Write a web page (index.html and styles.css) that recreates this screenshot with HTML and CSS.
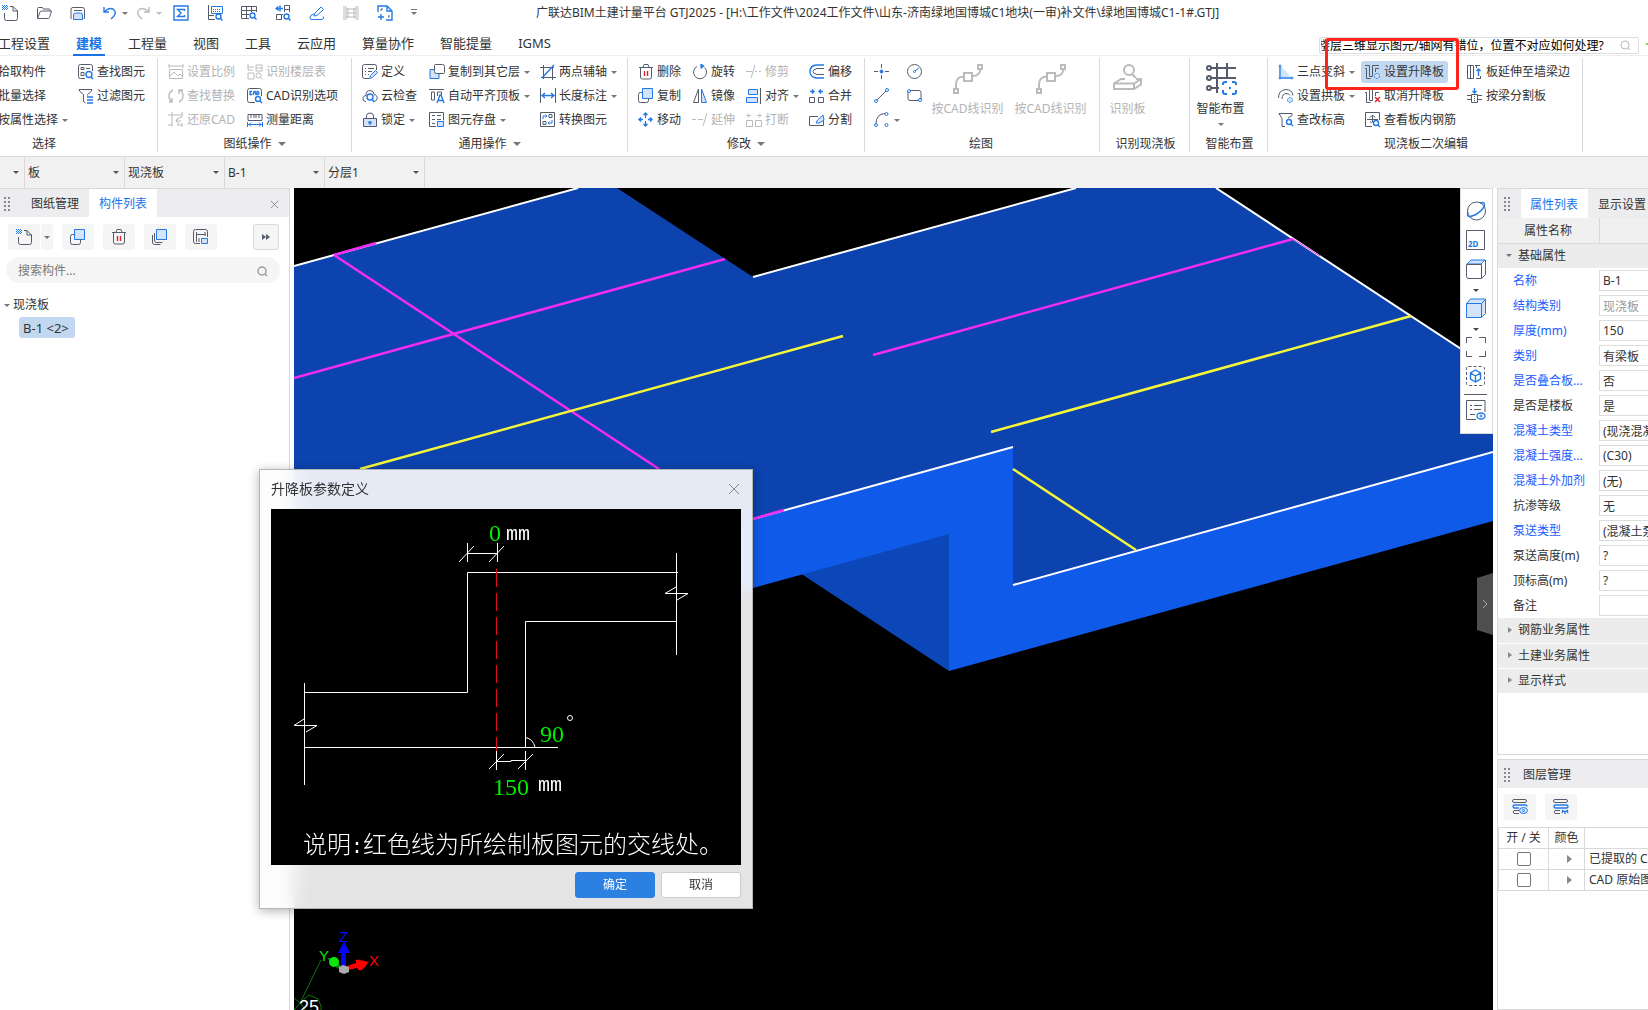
FILE: index.html
```html
<!DOCTYPE html>
<html lang="zh-CN">
<head>
    <meta charset="UTF-8">
    <meta name="viewport" content="width=device-width, initial-scale=1.0">
    <title>广联达BIM土建计量平台 GTJ2025</title>
    <link rel="stylesheet" href="styles.css">
</head>
<body>
    <!-- Title bar -->
    <header class="titlebar">
        <div class="quick">
            <button aria-label="新建"><svg class="ico" viewBox="0 0 16 16"><path d="M8 1.500h3l4.500 4.500v7.500q0 2-2 2h-9q-2 0-2-2V8M11 1.500V6h4.500"/><path class="b" stroke-dasharray="1 1" d="M0 .5h5M1 1.500h5M0 2.500h5M1 3.500h5M0 4.500h5"/></svg></button>
            <button aria-label="打开"><svg class="ico" viewBox="0 0 16 16"><path d="M1.500 13V3.500q0-1 1-1h4l1 1.500h5.500q1 0 1 1V6M1.500 13.500h10.500q1 0 1.500-1l2-6.500h-10q-1 0-1.500 1z"/></svg></button>
            <button aria-label="保存"><svg class="ico" viewBox="0 0 16 16"><path d="M1.500 13.500h-.5V4.500q0-2 2-2h9.500q2 0 2 2v9h-1M4 5.500h8"/><path class="b lf" d="M3.500 14.500V10q0-2 2-2h5q2 0 2 2v4.500z"/></svg></button>
        </div>
        <div class="quick undo">
            <button aria-label="撤销"><svg class="ico" viewBox="0 0 16 16"><path class="b w" d="M2 2v5h5M2 7q5-5 9-3q4 3 1 7l-3 3"/></svg><i class="caret"></i></button>
            <button class="off" aria-label="重做"><svg class="ico" viewBox="0 0 16 16"><path class="w" d="M13 2v5H8M13 7q-5-5-9-3q-4 3-1 7l3 3"/></svg><i class="caret"></i></button>
        </div>
        <div class="quick rest">
            <button aria-label="汇总计算"><svg class="ico" viewBox="0 0 16 16"><path class="b w" d="M1 1h14v14H1zM11.500 6V4.500h-7L8 8l-3.500 3.500h7V10"/></svg></button>
            <button aria-label="查看计算式"><svg class="ico" viewBox="0 0 16 16"><path d="M1.500 0v14.500H8M2 10.500h5"/><path class="b" d="M4.500 1.500h11v7h-11z"/><path class="b" stroke-dasharray="1 1" d="M6 4.500h8M6 6.500h8"/><circle class="b w" cx="11.500" cy="11.500" r="2.500"/><path class="b w" d="M13.500 13.500l2 2"/></svg></button>
            <button aria-label="查看报表"><svg class="ico" viewBox="0 0 16 16"><path d="M.5 1.500h15V7M.5 1.500v12H8M.5 5.500h15M.5 9.500H8M5.500 1.500v12M10.500 1.500V7"/><circle class="b w" cx="11.500" cy="10.500" r="2.500"/><path class="b w" d="M13.500 12.500l2 2"/></svg></button>
            <button aria-label="查看工程量"><svg class="ico" viewBox="0 0 16 16"><path d="M9.500 7V.500h5V7M9.500 4.500h5M1.500 9.500h5v5h-5zM8 9.500h-1"/><path class="b w" d="M5 .5v6M2 3.500h6M3.500 1.500L1 3.500l2.500 2"/><circle class="b w" cx="11.500" cy="11.500" r="2.500"/><path class="b w" d="M13.500 13.500l2 2"/></svg></button>
            <button aria-label="批注"><svg class="ico" viewBox="0 0 16 16"><path class="b" d="M5 11l1-3 6-6 2.500 2.500-6.500 6zM5 9q-4 1-4 3.500t2 2h10q3-1 1-3"/></svg></button>
            <button class="off" aria-label="多图"><svg class="ico" viewBox="0 0 16 16"><path d="M1 1v14M3 1v14M13 1v14M15 1v14M3 4h10M3 8h10M3 12h10M5 3v10M11 3v10"/></svg></button>
            <button aria-label="扩展"><svg class="ico" viewBox="0 0 16 16"><path class="b w" d="M1 7V1h9l5 5v9H9M10 1v5h5M4 9v6M1 12h6"/><path d="M4 6V4h2M11 12h1v-2"/></svg></button>
            <button class="more" aria-label="更多"><i class="caret"></i></button>
        </div>
        <div class="doc-title">广联达BIM土建计量平台 GTJ2025 - [H:\工作文件\2024工作文件\山东-济南绿地国博城C1地块(一审)补文件\绿地国博城C1-1#.GTJ]</div>
    </header>

    <!-- Tabs -->
    <nav class="tabs">
        <button>工程设置</button>
        <button class="active">建模</button>
        <button>工程量</button>
        <button>视图</button>
        <button>工具</button>
        <button>云应用</button>
        <button>算量协作</button>
        <button>智能提量</button>
        <button>IGMS</button>
        <div class="help-search">
            <input type="text" aria-label="搜索帮助" value="楼层三维显示图元/轴网有错位，位置不对应如何处理?">
            <svg class="ico off" viewBox="0 0 16 16"><circle cx="8" cy="7" r="4"/><path d="M11 10l2 2"/></svg>
        </div>
        <i class="edge-mark"></i>
    </nav>

    <!-- Ribbon -->
    <section class="ribbon">
        <div class="group g-select">
            <div class="group-body cells">
                <button>拾取构件</button>
                <button><svg class="ico" viewBox="0 0 16 16"><path d="M7 14.500H2.500q-2 0-2-2v-10q0-2 2-2h10q2 0 2 2V7M3 3.500h3v2H3zM3 8.500h3v3H3zM8 4.500h4"/><circle class="b w" cx="11" cy="10.500" r="3"/><path class="b w" d="M13 13l2 2"/></svg>查找图元</button>
                <button>批量选择</button>
                <button><svg class="ico" viewBox="0 0 16 16"><path d="M1 1.500h13q0 2-4.500 5v1M1 1.500q0 2 4.500 5v7l2 1.500"/><path class="b w" d="M9 9h6M9 12h6M9 15h6"/></svg>过滤图元</button>
                <button>按属性选择<i class="caret"></i></button>
            </div>
            <div class="group-name">选择</div>
        </div>
        <div class="group g-drawing">
            <div class="group-body cells">
                <button class="off" disabled><svg class="ico" viewBox="0 0 16 16"><path d="M1 0v4M15 0v4M1 2h14M1.500 5.500h13v9h-13zM2 12l4-4 4 4 2-2 3 3"/></svg>设置比例</button>
                <button class="off" disabled><svg class="ico" viewBox="0 0 16 16"><path d="M1 0v6h5M1 9h6v6H1zM9 1h6v6H9zM1 3h6M9 4h6"/><circle cx="11.500" cy="11.500" r="2.500"/><path d="M13.500 13.500l2 2"/></svg>识别楼层表</button>
                <button class="off" disabled><svg class="ico" viewBox="0 0 16 16"><path class="w" d="M5 2Q1 4 1 8t3 6M4 10v4H1M11 14q4-2 4-6t-3-6M11 6V2h4"/></svg>查找替换</button>
                <button><svg class="ico" viewBox="0 0 16 16"><path d="M8 14.500H2.500q-2 0-2-2v-10q0-2 2-2h10q2 0 2 2V8"/><path class="b w" d="M5 3.500H3v3h2M6 7l1-3.500h1L9 7M10 3.500h1q2 1.500 0 3h-1z"/><circle class="b w" cx="11" cy="11" r="2.500"/><path class="b w" d="M13 13l2 2"/></svg>CAD识别选项</button>
                <button class="off" disabled><svg class="ico" viewBox="0 0 16 16"><path d="M4 0v14M0 3h15M14 0v5M0 13h5M9 13h6M14 11v4M14 5q-6 1-6 4h5M10 6L8 9l3 3"/></svg>还原CAD</button>
                <button><svg class="ico" viewBox="0 0 16 16"><path d="M1 2.500h14v6H1zM4 3v3M7 3v3M9 3v3M12 3v3"/><path class="b" d="M.5 10v5M15.500 10v5M1 12.500h14M4 10.500l-2 2 2 2M12 10.500l2 2-2 2"/></svg>测量距离</button>
            </div>
            <div class="group-name">图纸操作<i class="caret big"></i></div>
        </div>
        <div class="group g-common">
            <div class="group-body cells">
                <button><svg class="ico" viewBox="0 0 16 16"><path d="M7 14.500H2.500q-2 0-2-2v-10q0-2 2-2h10q2 0 2 2V6M3 4.500h1M6 4.500h6M3 7.500h1M6 7.500h4M3 10.500h1M6 10.500h1"/><path class="b lf" d="M7.500 14.500l1-3 5-5 2 2-5 5z"/></svg>定义</button>
                <button><svg class="ico" viewBox="0 0 16 16"><path class="b lf" d="M1 5.500h9v9H1z"/><path class="wf" d="M5.500 1.500q0-1 1-1h7q2 0 2 2v6q0 1-1 1h-7q-2 0-2-2z"/></svg>复制到其它层<i class="caret"></i></button>
                <button><svg class="ico" viewBox="0 0 16 16"><path d="M0 3.500h14M3.500 1v14M1 13.500h15M12.500 4v12"/><path class="b w" d="M2 14L14 1"/></svg>两点辅轴<i class="caret"></i></button>
                <button><svg class="ico" viewBox="0 0 16 16"><path d="M4 13.500H3q-3-1-2-4 1-2 3-2 0-5 4-5t4 4q4 1 3 4.500-1 2.500-3 2.500"/><circle class="b w" cx="8" cy="9" r="3"/><path class="b w" d="M10 11l2 3"/></svg>云检查</button>
                <button><svg class="ico" viewBox="0 0 16 16"><path d="M0 1.500h15M2.500 4v8h3V4zM8.500 8V4h4v3"/><path class="b w" d="M8 15l3-8h1l3 8M9 12.500h5"/></svg>自动平齐顶板<i class="caret"></i></button>
                <button><svg class="ico" viewBox="0 0 16 16"><path d="M.5 0v15M15.500 0v15"/><path class="b w" d="M2 7.500h12M5 5L2 7.500 5 10M11 5l3 2.500-3 2.500"/></svg>长度标注<i class="caret"></i></button>
                <button><svg class="ico" viewBox="0 0 16 16"><path d="M4.500 6V4q0-3 3.500-3t3.500 3v2"/><path class="lf" d="M1.500 6.500h13v8h-13z"/><path class="b w" d="M8 9v4M6 10.500h4"/></svg>锁定<i class="caret"></i></button>
                <button><svg class="ico" viewBox="0 0 16 16"><path d="M7 14.500H.5V.5h14v8M3 3.500h3M3 7.500h3M3 11.500h3M8 3.500h4M8 7.500h4"/><path class="b lf" d="M8.500 9.500h6v5h-6z"/></svg>图元存盘<i class="caret"></i></button>
                <button><svg class="ico" viewBox="0 0 16 16"><path d="M.5.5h14v14H.5zM9 2.500h3v3H9zM3 9.500h3v3H3z"/><path class="b" d="M3 7V4h4M5.500 2.500L7 4 5.500 5.500M12 8v3H8M9.500 9.500L8 11l1.500 1.500"/></svg>转换图元</button>
            </div>
            <div class="group-name">通用操作<i class="caret big"></i></div>
        </div>
        <div class="group g-modify">
            <div class="group-body cells">
                <button><svg class="ico" viewBox="0 0 16 16"><path d="M1 3.500h14M2.500 4v9q0 2 2 2h7q2 0 2-2V4M5 3l1-2.500h4L11 3"/><path class="r w" d="M6.500 7v5M9.500 7v5"/></svg>删除</button>
                <button><svg class="ico" viewBox="0 0 16 16"><path d="M5 2.500A6.500 6.500 0 1 0 12.500 3.500"/><path class="b w" d="M8.500 0l3 2-3 2.500M11 2H8"/></svg>旋转</button>
                <button class="off" disabled><svg class="ico" viewBox="0 0 16 16"><path d="M0 7.500h6M9 1L5 14M9 7.500h2M13 7.500h2"/></svg>修剪</button>
                <button><svg class="ico" viewBox="0 0 16 16"><path class="b w" d="M15 1H7Q1 2 1 7.500T7 14h8"/><path d="M15 4.500H8q-4 1-4 3t4 3h7"/></svg>偏移</button>
                <button><svg class="ico" viewBox="0 0 16 16"><path d="M5 4.500H2.500q-2 0-2 2v6q0 2 2 2h6q2 0 2-2V11"/><path class="b lf" d="M4.500.500h10v10h-10z"/></svg>复制</button>
                <button><svg class="ico" viewBox="0 0 16 16"><path d="M6.500 1v13.500h-5z"/><path class="b lf" d="M9.500 1v13.500h5z"/></svg>镜像</button>
                <button><svg class="ico" viewBox="0 0 16 16"><path class="b lf" d="M2.500 1.500h9v5h-9zM.5 9.500h11v5H.5z"/><path d="M14.500 0v16"/></svg>对齐<i class="caret"></i></button>
                <button><svg class="ico" viewBox="0 0 16 16"><path d="M.5 9.500h5v5h-5zM9.500 9.500h5v5h-5z"/><path class="b w" d="M1 3.500h4M3 1.500l2 2-2 2M14 3.500h-4M12 1.500l-2 2 2 2"/></svg>合并</button>
                <button><svg class="ico" viewBox="0 0 16 16"><path class="b w" d="M7.500 5V1M5.500 3l2-2 2 2M7.500 10v4M5.500 12l2 2 2-2M5 7.500H1M3 5.500l-2 2 2 2M10 7.500h4M12 5.500l2 2-2 2"/><path d="M7 5.500h1M7 9.500h1"/></svg>移动</button>
                <button class="off" disabled><svg class="ico" viewBox="0 0 16 16"><path d="M0 7.500h4M6 7.500h5M15 1l-4 13"/></svg>延伸</button>
                <button class="off" disabled><svg class="ico" viewBox="0 0 16 16"><path d="M.5 8.500h6v6h-6zM9.500 8.500h6v6h-6zM5 3.500H1M3 1.500l-2 2 2 2M11 3.500h4M13 1.500l2 2-2 2"/></svg>打断</button>
                <button><svg class="ico" viewBox="0 0 16 16"><path d="M9 4.500H.5v9h14V8"/><path class="b lf" d="M7 11l1.500-3L14 3l1 5-5 3z"/></svg>分割</button>
            </div>
            <div class="group-name">修改<i class="caret big"></i></div>
        </div>
        <div class="group g-draw">
            <div class="group-body">
                <div class="cells">
                    <button aria-label="点"><svg class="ico" viewBox="0 0 16 16"><path d="M7.500 0v4M7.500 11v4M0 7.500h4M11 7.500h4"/><circle class="b bf" cx="7.500" cy="7.500" r="1.500"/></svg></button>
                    <button aria-label="圆"><svg class="ico" viewBox="0 0 16 16"><circle cx="7.500" cy="7.500" r="7"/><path class="b" d="M8 7l4-3"/><circle class="b" cx="7.500" cy="7.500" r="1"/></svg></button>
                    <button aria-label="直线"><svg class="ico" viewBox="0 0 16 16"><path d="M3 12L12 3"/><circle class="b" cx="2" cy="13" r="1.500"/><circle class="b" cx="13" cy="2" r="1.500"/></svg></button>
                    <button aria-label="矩形"><svg class="ico" viewBox="0 0 16 16"><path d="M3 2.500h9q2 0 2 2V11M12 12.500H3q-2 0-2-2V4"/><circle class="b" cx="2" cy="3" r="1.500"/><circle class="b" cx="13" cy="12" r="1.500"/></svg></button>
                    <button aria-label="弧线"><svg class="ico" viewBox="0 0 16 16"><path d="M2 12Q2 2 11 1.500"/><circle class="b" cx="2" cy="13" r="1.500"/><circle class="b" cx="12.500" cy="2" r="1.500"/><circle class="b" cx="12.500" cy="13" r="1.500"/></svg><i class="caret"></i></button>
                </div>
                <button class="large off" disabled><svg class="ico32" viewBox="0 0 32 32"><path d="M4 25V21q0-7 8-7.500M21 13q6 0 7.500-6M12 10h8v8h-8zM2 26h4v4H2zM26 2h4v4h-4z"/></svg>按CAD线识别</button>
                <button class="large off" disabled><svg class="ico32" viewBox="0 0 32 32"><path d="M4 25V21q0-7 8-7.500M21 13q6 0 7.500-6M12 10h8v8h-8zM2 26h4v4H2zM26 2h4v4h-4z"/></svg>按CAD线识别</button>
            </div>
            <div class="group-name">绘图</div>
        </div>
        <div class="group g-slab">
            <div class="group-body">
                <button class="large off" disabled><svg class="ico32" viewBox="0 0 32 32"><circle cx="17" cy="7" r="5"/><path d="M20 11l4 4M13 16H9l-7 4.500V26h20l7-4.500V16h-5M2 20.500h20l7-4.500M22 20.500V26"/></svg>识别板</button>
            </div>
            <div class="group-name">识别现浇板</div>
        </div>
        <div class="group g-smart">
            <div class="group-body">
                <button class="large"><svg class="ico32" viewBox="0 0 32 32"><path d="M6 5h25M6 15h25M6 25h8M12 0v30M22 0v15"/><circle cx="4" cy="5" r="2"/><circle cx="4" cy="15" r="2"/><circle cx="4" cy="25" r="2"/><path class="b" d="M18 22v-1q0-2 2-2h2M27 19h2q2 0 2 2v1M31 27v2q0 2-2 2h-2M22 31h-2q-2 0-2-2v-2M24 25h2"/></svg>智能布置<i class="caret"></i></button>
            </div>
            <div class="group-name">智能布置</div>
        </div>
        <div class="group g-edit">
            <div class="group-body cells">
                <button><svg class="ico" viewBox="0 0 16 16"><path class="lf nos" d="M3 2l10 11H3z"/><path class="b w" d="M2 2v12h12"/><circle class="b wf" cx="2" cy="2" r="1"/><circle class="b wf" cx="2" cy="14" r="1"/><circle class="b wf" cx="14" cy="14" r="1"/></svg>三点变斜<i class="caret"></i></button>
                <button class="pressed"><svg class="ico" viewBox="0 0 16 16"><path d="M0 1.500h4.500v11h3M0 4.500h1.500v10h4M7.500 12.500v-11H14M10.500 8V4.500H14"/><circle class="b lf" cx="12" cy="12" r="2.500" stroke-dasharray="2 1"/></svg>设置升降板</button>
                <button><svg class="ico" viewBox="0 0 16 16"><path d="M.5 1.500h6v13h-6zM3.500 2v12M8 1.500h5M9 14.500h5M13.500 12v2M9.500 1v3"/><path class="b w" d="M11.500 12V5M9.500 7l2-2 2 2"/></svg>板延伸至墙梁边</button>
                <button><svg class="ico" viewBox="0 0 16 16"><path d="M.5 10q0-8 7.500-8.500 6 0 7 6M4 11q0-5 4-5.500 3 0 4 2"/><circle class="b lf" cx="12" cy="12" r="2.500" stroke-dasharray="2 1"/></svg>设置拱板<i class="caret"></i></button>
                <button><svg class="ico" viewBox="0 0 16 16"><path d="M0 1.500h4.500v11h3M0 4.500h1.500v10h4M7.500 12.500v-11H14M10.500 8V4.500H14"/><path class="r w" d="M10 9l5 5M15 9l-5 5"/></svg>取消升降板</button>
                <button><svg class="ico" viewBox="0 0 16 16"><path d="M4.500 6.500h6v8h-6zM0 7.500h4M11 7.500h4M0 11.500h4M11 11.500h4M7.500 8v1M7.500 10v1M7.500 12v1"/><path class="b w" d="M7.500 0v5M5.500 3l2 2 2-2"/></svg>按梁分割板</button>
                <button><svg class="ico" viewBox="0 0 16 16"><path d="M1 1.500h13v2L10 6M1 1.500l3 5v8h3"/><circle class="b w" cx="11" cy="10" r="2.500"/><path class="b w" d="M13 12l2 2"/></svg>查改标高</button>
                <button><svg class="ico" viewBox="0 0 16 16"><path d="M7 14.500H.5V.5h14V8M2 7.500h11M7.500 3v7M5 5.500q3-4 5 0M5 9.500q1 2 3 0"/><circle class="b w" cx="11" cy="11" r="2.500"/><path class="b w" d="M13 13l2 2"/></svg>查看板内钢筋</button>
            </div>
            <div class="group-name">现浇板二次编辑</div>
        </div>
    </section>

    <!-- Floor / component selectors -->
    <div class="selectors">
        <span class="pick first"><select aria-label="楼层"><option></option></select></span>
        <span class="pick"><select aria-label="构件分类"><option>板</option></select></span>
        <span class="pick"><select aria-label="构件类型"><option>现浇板</option></select></span>
        <span class="pick"><select aria-label="构件"><option>B-1</option></select></span>
        <span class="pick"><select aria-label="分层"><option>分层1</option></select></span>
    </div>

    <main class="work">
        <!-- Component list -->
        <aside class="panel left">
            <div class="panel-head">
                <i class="grip"></i>
                <button>图纸管理</button>
                <button class="active">构件列表</button>
                <button class="close" aria-label="关闭"><svg viewBox="0 0 10 10"><path d="M1 1l8 8M9 1L1 9"/></svg></button>
            </div>
            <div class="tools">
                <button class="tool joined" aria-label="新建构件"><svg class="ico" viewBox="0 0 16 16"><path d="M8 1.500h3l4.500 4.500v7.500q0 2-2 2h-9q-2 0-2-2V8M11 1.500V6h4.500"/><path class="b" stroke-dasharray="1 1" d="M0 .5h5M1 1.500h5M0 2.500h5M1 3.500h5M0 4.500h5"/></svg></button>
                <button class="tool drop" aria-label="新建选项"><i class="caret"></i></button>
                <button class="tool" aria-label="复制构件"><svg class="ico" viewBox="0 0 16 16"><path d="M5 5.500H2.500q-2 0-2 2v6q0 2 2 2h6q2 0 2-2V11"/><path class="b lf" d="M4.500.500h10v10h-10z"/></svg></button>
                <button class="tool" aria-label="删除构件"><svg class="ico" viewBox="0 0 16 16"><path d="M1 3.500h14M2.500 4v9q0 2 2 2h7q2 0 2-2V4M5 3l1-2.500h4L11 3"/><path class="r w" d="M6.500 7v5M9.500 7v5"/></svg></button>
                <button class="tool" aria-label="层间复制"><svg class="ico" viewBox="0 0 16 16"><path d="M2.500 4v7q0 2.500 2 2.500h6M.5 6v7q0 2.500 2 2.500h6"/><path class="b lf" d="M4.500.500h10v10h-10z"/></svg></button>
                <button class="tool" aria-label="构件存盘"><svg class="ico" viewBox="0 0 16 16"><path d="M7 14.500H2.500q-2 0-2-2v-10q0-2 2-2h10q2 0 2 2V8M3.500 3v10M3.500 5.500h9M12 3v4M6 9v4"/><path class="b lf" d="M8.500 9.500h6v5h-6z"/></svg></button>
                <button class="tool expand" aria-label="展开"><svg viewBox="0 0 8 6"><path d="M0 0l4 3-4 3zM4 0l4 3-4 3z"/></svg></button>
            </div>
            <div class="find">
                <input type="text" placeholder="搜索构件..." aria-label="搜索构件">
                <svg class="ico" viewBox="0 0 16 16"><circle class="w" cx="7" cy="8" r="4"/><path class="w" d="M10 11l2 2"/></svg>
            </div>
            <div class="tree">
                <div class="node"><i class="caret"></i>现浇板</div>
                <button class="leaf">B-1 &lt;2&gt;</button>
            </div>
        </aside>

        <!-- 3D view -->
        <div class="view">
            <svg class="scene" viewBox="294 188 1199 822" preserveAspectRatio="xMinYMin slice">
                <polygon fill="#0c43ae" points="294,266 578,188 617,188 753,277 1076,188 1216,188 1493,370 1493,460 1013,593 1013,460 753,530 294,660"/>
                <polygon fill="#0c47ba" points="960,520 960,665 949,671 803,575 790,565"/>
                <polygon fill="#105aea" points="1013,447 1013,585 1493,452 1493,521 949,671 949,534 753,588 294,715 294,646 753,519"/>
                <g stroke="#fff" stroke-width="2">
                    <path d="M294 266L578 188M753 277L1076 188M1216 188L1493 370M753 519L1013 447M1013 585L1493 452"/>
                </g>
                <g stroke="#f32cf3" stroke-width="2.5">
                    <path d="M334 255L376 243M334 255L659 469M294 378L725 259M873 355L1293 239M753 519L784 510"/>
                    <path stroke-width="1" d="M1293 239L1320 256"/>
                </g>
                <path stroke="#f7f73a" stroke-width="2.5" d="M360 469L843 336M991 432L1411 316M1013 469L1136 550"/>
                <!-- axes -->
                <path fill="#0606f0" d="M341 966v-13h-3l6-12 6 12h-4v13z"/>
                <path fill="#f00" d="M347 966l9-3v-3q3-1 4 0l9 2-7 8q-4 1-5-2l-9 2z"/>
                <path fill="#0a7d0a" d="M327 958l6 0 8 8-3 3z"/>
                <circle fill="#0be50b" cx="334" cy="962" r="5"/>
                <path fill="#aaa" d="M339 967l4-2 6 2v5l-5 2-5-2z"/>
                <path stroke="#107510" d="M321 960L300 1003M294 998l6 5 9-8 9 4 3 7v6M294 1010l6-7 10 12"/>
                <text class="axis" fill="#0a0af5" x="339" y="942">Z</text>
                <text class="axis" fill="#f00" x="369" y="966">X</text>
                <text class="axis" fill="#0be50b" x="319" y="961">Y</text>
                <text class="axis-no" fill="#fff" x="299" y="1013">25</text>
            </svg>

            <div class="view-tools">
                <button aria-label="动态观察"><svg viewBox="0 0 20 20"><circle cx="10.500" cy="10" r="9"/><path class="b w" d="M2 11q-2 6 4 4 7-2 12-9 2-6-4-4"/></svg></button>
                <button aria-label="二维"><svg viewBox="0 0 20 20"><path d="M.5.500h18v19H.5z"/><text x="2" y="17">2D</text></svg></button>
                <button aria-label="视图"><svg viewBox="0 0 20 20"><path class="b lf" d="M1 5l4-4h14l-4 4z"/><path d="M.5 5.500h15v14H3q-2.500 0-2.500-2zM15.500 19.500l4-4V1"/></svg></button>
                <i class="caret"></i>
                <button aria-label="显示方式"><svg viewBox="0 0 20 20"><path class="b lf" d="M.5 5.500l4-4.500h15v14.500l-4 4H.5zM.5 5.500h15v14M15.500 5.500l4-4"/></svg></button>
                <i class="caret"></i>
                <button aria-label="全屏"><svg viewBox="0 0 20 20"><path d="M.5 6V.500H6M13 .5h6.500V6M19.500 14v5.500H13M6 19.500H.500V14"/></svg></button>
                <button aria-label="局部三维"><svg viewBox="0 0 20 20"><rect x=".5" y=".5" width="18" height="19" rx="2" stroke-dasharray="3 2"/><path class="b w" d="M9.500 4l5 3v6l-5 3-5-3V7zM4.500 7l5 3 5-3M9.500 10v6"/></svg></button>
                <hr>
                <button aria-label="显示设置"><svg viewBox="0 0 20 20"><path d="M10 19.500H.500V.500h18.500V12M4 5.500h2M8 5.500h8M4 9.500h2M8 9.500h7M4 14.500h5"/><ellipse class="b w" cx="15" cy="16" rx="4" ry="3"/><circle class="b" cx="15" cy="16" r="1"/></svg></button>
            </div>
            <button class="handle" aria-label="收起"><svg viewBox="0 0 6 10"><path d="M1 1l4 4-4 4"/></svg></button>
        </div>

        <!-- Properties and layers -->
        <div class="right">
            <aside class="panel props">
                <div class="panel-head">
                    <i class="grip"></i>
                    <button class="active">属性列表</button>
                    <button>显示设置</button>
                </div>
                <table class="prop-table">
                    <tr class="cols"><th>属性名称</th><th></th></tr>
                    <tr class="section"><td colspan="2"><i class="caret"></i>基础属性</td></tr>
                    <tr class="key"><td><label for="p1">名称</label></td><td><input id="p1" value="B-1"></td></tr>
                    <tr class="key"><td><label for="p2">结构类别</label></td><td><input id="p2" value="现浇板" disabled></td></tr>
                    <tr class="key"><td><label for="p3">厚度(mm)</label></td><td><input id="p3" value="150"></td></tr>
                    <tr class="key"><td><label for="p4">类别</label></td><td><input id="p4" value="有梁板"></td></tr>
                    <tr class="key"><td><label for="p5">是否叠合板...</label></td><td><input id="p5" value="否"></td></tr>
                    <tr><td><label for="p6">是否是楼板</label></td><td><input id="p6" value="是"></td></tr>
                    <tr class="key"><td><label for="p7">混凝土类型</label></td><td><input id="p7" value="(现浇混凝土)"></td></tr>
                    <tr class="key"><td><label for="p8">混凝土强度...</label></td><td><input id="p8" value="(C30)"></td></tr>
                    <tr class="key"><td><label for="p9">混凝土外加剂</label></td><td><input id="p9" value="(无)"></td></tr>
                    <tr><td><label for="p10">抗渗等级</label></td><td><input id="p10" value="无"></td></tr>
                    <tr class="key"><td><label for="p11">泵送类型</label></td><td><input id="p11" value="(混凝土泵)"></td></tr>
                    <tr><td><label for="p12">泵送高度(m)</label></td><td><input id="p12" value="?"></td></tr>
                    <tr><td><label for="p13">顶标高(m)</label></td><td><input id="p13" value="?"></td></tr>
                    <tr><td><label for="p14">备注</label></td><td><input id="p14" value=""></td></tr>
                    <tr class="section"><td colspan="2"><i class="caret side"></i>钢筋业务属性</td></tr>
                    <tr class="section"><td colspan="2"><i class="caret side"></i>土建业务属性</td></tr>
                    <tr class="section"><td colspan="2"><i class="caret side"></i>显示样式</td></tr>
                </table>
            </aside>
            <aside class="panel layers">
                <div class="panel-head">
                    <i class="grip"></i>
                    <h2>图层管理</h2>
                </div>
                <div class="tools">
                    <button class="tool" aria-label="显示图层"><svg class="ico" viewBox="0 0 16 16"><rect x=".5" y=".5" width="14" height="3" rx="1.500"/><path class="b w" d="M7 9H2q-2-1.500 0-3h11q2 0 2 1.500"/><path d="M7 14.500H2q-2-1.500 0-3h5"/><ellipse class="b lf" cx="11.500" cy="11.500" rx="4" ry="3"/><circle class="b" cx="11.500" cy="11.500" r="1"/></svg></button>
                    <button class="tool" aria-label="隐藏图层"><svg class="ico" viewBox="0 0 16 16"><rect x=".5" y=".5" width="14" height="3" rx="1.500"/><rect class="b w" x="1" y="6" width="14" height="3" rx="1.500"/><path d="M7 14.500H2q-2-1.500 0-3h5"/><path class="b w" d="M9 11q3 3 6 0M9 14l1-2M12 15v-2M15 14l-1-2"/></svg></button>
                </div>
                <table class="layer-table">
                    <tr><th>开 / 关</th><th>颜色</th><th></th></tr>
                    <tr><td><input type="checkbox" aria-label="已提取的 CAD 图层"></td><td><i class="caret side"></i></td><td>已提取的 CAD 图层</td></tr>
                    <tr><td><input type="checkbox" aria-label="CAD 原始图层"></td><td><i class="caret side"></i></td><td>CAD 原始图层</td></tr>
                </table>
            </aside>
        </div>
    </main>

    <!-- Slab step dialog -->
    <div class="dialog" role="dialog" aria-labelledby="dlgTitle">
        <div class="dialog-head">
            <h1 id="dlgTitle">升降板参数定义</h1>
            <button class="close" aria-label="关闭"><svg viewBox="0 0 12 12"><path d="M1 1l10 10M11 1L1 11"/></svg></button>
        </div>
        <svg class="figure" viewBox="0 0 470 356">
            <g class="ink">
                <path d="M407 63.500H196.500V183.500H33.500M405.500 112.500H254.500V238.500M33.500 238.500H287"/>
                <path d="M405.500 44V146M405 78L394 84.500H417L406 91"/>
                <path d="M33.500 174V276M33 210L23 216.500H46L35 223"/>
                <path d="M196.500 34V53M226.500 34V53M196 44.500H227M188 53L203 37M218 53L233 37"/>
                <path d="M225.500 242V261M254.500 242V261M225 252.500H240V251.500H255M218 260L233 245M247 260L262 245"/>
                <path d="M254.500 228.500Q262 230 264 238"/>
                <circle cx="299" cy="209" r="2.500"/>
            </g>
            <path class="joint" d="M225.500 60V242"/>
            <text class="num" x="218" y="32">0</text>
            <text class="num" x="269" y="233">90</text>
            <text class="num" x="222" y="286">150</text>
            <text class="unit" x="235" y="31">mm</text>
            <text class="unit" x="267" y="282">mm</text>
            <text class="note" x="32" y="344">说明<tspan class="colon">:</tspan>红色线为所绘制板图元的交线处。</text>
        </svg>
        <div class="dialog-foot">
            <button class="ok">确定</button>
            <button>取消</button>
        </div>
    </div>

    <div class="mark"></div>
</body>
</html>
```
FILE: styles.css
```css
* { box-sizing: border-box; }
body {
    margin: 0;
    height: 100vh;
    display: flex;
    flex-direction: column;
    overflow: hidden;
    position: relative;
    background: #fff;
    color: #333;
    font: 12px/16px "Noto Sans", "Noto Sans CJK SC", sans-serif;
}
button {
    display: flex;
    align-items: center;
    border: none;
    background: none;
    padding: 0;
    margin: 0;
    font: inherit;
    color: inherit;
    white-space: nowrap;
}
input, select { font: inherit; color: inherit; }

/* icons */
svg { fill: none; stroke: #545b6b; flex: none; display: block; }
.ico { width: 16px; height: 16px; }
.ico32 { width: 32px; height: 32px; stroke-width: 2; }
.b { stroke: #2379e6; }
.r { stroke: #d9222a; }
.w { stroke-width: 1.4; }
.lf { fill: #d3e4fa; }
.wf { fill: #fff; }
.bf { fill: #2379e6; }
.nos { stroke: none; }
.off { color: #b3b3b3; }
.off svg, svg.off { stroke: #bbb; }
.caret {
    flex: none;
    border: 3px solid transparent;
    border-top: 3px solid #777;
    border-bottom: none;
}
.caret.big { border-width: 4px 4px 0; }
.caret.side {
    border: 4px solid transparent;
    border-left: 5px solid #888;
    border-right: none;
}

/* title bar */
.titlebar {
    flex: none;
    height: 28px;
    display: flex;
    align-items: center;
    padding: 0 0 2px 2px;
}
.quick { display: flex; gap: 18px; }
.quick button { gap: 4px; }
.quick.undo { gap: 8px; margin-left: 16px; }
.quick.rest { margin-left: 11px; }
.off .caret { border-top-color: #bbb; }
.more .caret { position: relative; }
.more .caret::before {
    content: "";
    position: absolute;
    left: -3px;
    top: -6px;
    width: 6px;
    height: 1px;
    background: #777;
}
.doc-title { margin-left: 119px; white-space: nowrap; }

/* tabs */
.tabs {
    flex: none;
    height: 28px;
    display: flex;
    gap: 20px;
    margin-left: -5px;
    border-bottom: 1px solid #eee;
    font-size: 13px;
}
.tabs button { padding: 4px 3px 0; height: 28px; border-bottom: 2px solid transparent; }
.tabs .active { color: #1a73e8; font-weight: bold; border-color: #1a73e8; }
.help-search {
    margin: 9px 0 0 auto;
    width: 320px;
    height: 17px;
    display: flex;
    align-items: center;
    padding: 0 5px 0 1px;
    border: 1px solid #ddd;
    border-radius: 2px;
    font-size: 12px;
}
.help-search input {
    flex: 1;
    min-width: 0;
    border: none;
    outline: none;
    padding: 0;
    height: 15px;
    text-indent: -3px;
    background: none;
    color: #000;
}
.edge-mark { width: 2px; height: 2px; margin: 15px 0 0 -13px; background: #8fce6a; }

/* ribbon */
.ribbon {
    flex: none;
    height: 101px;
    display: flex;
    padding: 2px 0 4px;
    border-bottom: 1px solid #d9d9d9;
}
.group {
    display: flex;
    flex-direction: column;
    padding: 2px 0 0 6px;
    border-right: 1px solid #d9d9d9;
}
.group-body { display: flex; flex: none; height: 72px; }
.cells { display: grid; grid-template-rows: repeat(3, 24px); align-items: center; justify-items: start; }
.cells button { height: 22px; padding: 0 4px; gap: 3px; border-radius: 3px; }
.cells .caret { margin-left: 1px; }
.cells .pressed { background: #c2d8f0; }
.group-name {
    flex: none;
    display: flex;
    align-items: center;
    justify-content: center;
    gap: 6px;
    height: 24px;
    padding-right: 6px;
}
.g-select { padding-left: 0; margin-left: -6px; }
.g-select .cells { grid-template-columns: 80px 83px; }
.g-select .group-name { padding-right: 63px; }
.g-drawing .cells { grid-template-columns: 79px 108px; }
.g-common .cells { grid-template-columns: 67px 111px 91px; }
.g-modify .cells { grid-template-columns: 54px 54px 63px 59px; }
.g-draw { padding-left: 5px; }
.g-draw .group-name { padding: 0; }
.g-draw .cells { grid-template-columns: 33px 23px; }
.g-draw { padding-right: 7px; }
.g-edit .cells { grid-template-columns: 87px 102px 119px; }
.g-edit .group-name { padding-right: 4px; }
.large {
    flex-direction: column;
    width: 83px;
    padding-top: 3px;
    gap: 6px;
}
.g-slab, .g-smart { padding-left: 0; }
.g-slab .group-name { padding-right: 0; padding-left: 2px; }
.g-smart .group-name { padding-right: 0; padding-left: 2px; }
.g-slab { width: 90px; }
.g-slab .large { width: 55px; }
.g-smart { width: 78px; }
.g-smart .large { width: 61px; }

/* selector bar */
.selectors { flex: none; height: 31px; display: flex; background: #f1f1f1; }
.pick { position: relative; width: 100px; border-right: 1px solid #d9d9d9; }
.pick.first { width: 25px; }
.pick select {
    appearance: none;
    width: 100%;
    height: 31px;
    border: none;
    background: none;
    padding: 0 4px 0 3px;
}
.pick::after {
    content: "";
    position: absolute;
    right: 5px;
    top: 14px;
    border: 3px solid transparent;
    border-top: 3px solid #555;
    border-bottom: none;
}

/* work area */
.work { flex: 1; min-height: 0; display: flex; gap: 4px; }
.panel { border: 1px solid #d9d9d9; overflow: hidden; }
.panel.left { flex: none; width: 290px; border-left: none; border-bottom: none; }
.panel-head { display: flex; height: 28px; background: #ededf0; }
.panel-head button, .panel-head h2 { padding: 2px 10px 0; margin: 0; font: inherit; line-height: 28px; white-space: nowrap; }
.panel-head .active { background: #fff; color: #1a73e8; }
.panel-head .close { margin-left: auto; }
.close svg { width: 9px; height: 9px; stroke: #888; }
.grip {
    flex: none;
    width: 8px;
    height: 16px;
    margin: 7px 10px 0 3px;
    background: radial-gradient(circle, #888 1px, transparent 1px) 0 0 / 4px 4px;
}
.tools { display: flex; gap: 9px; padding: 7px 8px 7px; }
.tool { width: 32px; height: 26px; justify-content: center; background: #f5f5f6; border-radius: 3px; }
.tool.joined { margin-right: -8px; }
.tool.drop { width: 12px; }
.tool.expand { width: 26px; margin-left: auto; border: 1px solid #d9d9d9; }
.left .tools { padding-right: 10px; }
.expand svg { width: 8px; height: 6px; fill: #545b6b; stroke: none; }
.find {
    display: flex;
    align-items: center;
    height: 26px;
    margin: 0 9px 0 6px;
    padding: 1px 9px 0 12px;
    border-radius: 13px;
    background: #f5f5f5;
}
.find input { flex: 1; border: none; outline: none; background: none; padding: 0; }
.find input::placeholder { color: #777; }
.find svg { stroke: #999; }
.tree { padding: 10px 0 0 4px; }
.node { display: flex; align-items: center; gap: 3px; height: 24px; }
.leaf { height: 21px; margin: 0 0 0 15px; padding: 0 6px 0 4px; font-size: 13px; background: #c2d8f0; border-radius: 3px; }

/* 3D view */
.view { flex: 1; min-width: 0; position: relative; background: #000; overflow: hidden; }
.scene { width: 100%; height: 100%; stroke: none; }
.axis { font: 15px "Liberation Sans", sans-serif; }
.axis-no { font: 18px "Liberation Sans", sans-serif; }
.view-tools {
    position: absolute;
    top: 0;
    right: 0;
    width: 33px;
    height: 246px;
    display: flex;
    flex-direction: column;
    align-items: center;
    gap: 9px;
    padding: 12px 2px 0 0;
    background: #fff;
    border: 1px solid #d9d9d9;
}
.view-tools svg { width: 20px; height: 20px; }
.view-tools text { font: bold 8px "Noto Sans", sans-serif; fill: #2379e6; stroke: none; }
.view-tools .caret { margin: 1px 0 -3px; border-top-color: #444; }
.view-tools hr { width: 23px; margin: -1px 0 -4px; border: none; border-top: 1px solid #545b6b; }
.handle {
    position: absolute;
    right: 0;
    top: 385px;
    width: 16px;
    height: 62px;
    justify-content: center;
    background: #4f4f4f;
    clip-path: polygon(0 5px, 100% 0, 100% 100%, 0 57px);
}
.handle svg { width: 6px; height: 10px; stroke: #aaa; }

/* right side */
.right { flex: none; width: 151px; display: flex; flex-direction: column; gap: 4px; }
.right .panel { border-right: none; }
.right .grip { margin: 7px 12px 0 5px; }
.right .panel-head .active { padding: 2px 10px 0 9px; }
.right .grip + .active { margin-left: -2px; }
.props { flex: 1; min-height: 0; }
.props .panel-head { height: 29px; }
.prop-table, .layer-table { border-collapse: collapse; table-layout: fixed; }
.prop-table { width: 260px; }
.prop-table tr { height: 25px; }
.prop-table td, .prop-table th { padding: 0; font-weight: normal; text-align: left; }
.prop-table th { padding-top: 2px; background: #f0f0f0; border-bottom: 1px solid #d9d9d9; }
.prop-table th:first-child { width: 101px; padding-left: 26px; border-right: 1px solid #d9d9d9; }
.section td { background: #ececec; border-bottom: 1px solid #fff; }
.section .caret { display: inline-block; width: 0; margin: 0 6px 2px 8px; vertical-align: middle; }
.section .side { margin-left: 10px; border-width: 3px 0 3px 4px; margin-right: 6px; }
.prop-table label { padding-left: 15px; white-space: nowrap; }
.key label { color: #1a5cff; }
.prop-table input {
    display: block;
    width: 156px;
    height: 21px;
    padding: 0 3px;
    border: 1px solid #ddd;
    background: #fff;
}
.prop-table input:disabled { color: #999; }
.layers { flex: none; height: 251px; }
.panel-head h2 { padding: 1px 0 0; }
.layers .tools { padding: 6px 6px 7px; }
.layer-table { width: 240px; border-top: 1px solid #d9d9d9; }
.layer-table th, .layer-table td {
    height: 21px;
    padding: 0;
    border: 1px solid #d9d9d9;
    font-weight: normal;
    text-align: center;
    white-space: nowrap;
}
.layer-table th:nth-child(1) { width: 50px; }
.layer-table th:nth-child(2) { width: 36px; }
.layer-table td:nth-child(3) { text-align: left; padding-left: 4px; }
.layer-table .caret { display: inline-block; vertical-align: middle; margin: 0 0 2px 6px; }
.layer-table input {
    appearance: none;
    display: block;
    width: 14px;
    height: 14px;
    margin: 0 auto;
    border: 1px solid #777;
    border-radius: 2px;
    background: #fff;
}

/* dialog */
.dialog {
    position: absolute;
    left: 259px;
    top: 469px;
    width: 494px;
    border: 1px solid #b5b5b5;
    background: rgba(253, 253, 253, 0.9);
    backdrop-filter: blur(10px);
    box-shadow: 0 2px 10px rgba(0, 0, 0, 0.3);
    padding: 0 11px 10px;
}
.dialog-head { display: flex; align-items: center; justify-content: space-between; height: 39px; padding-bottom: 2px; }
.dialog-head h1 { margin: 0; font-size: 14px; font-weight: normal; }
.dialog-head .close { padding-right: 1px; }
.dialog-head svg { width: 12px; height: 12px; }
.figure { width: 470px; height: 356px; background: #000; }
.ink { stroke: #fff; }
.joint { stroke: #e01010; stroke-dasharray: 18 6; }
.figure text { stroke: none; fill: #fff; }
.figure .num { font: 24px "Liberation Serif", serif; fill: #00f000; }
.figure .unit { font: 20px "Liberation Mono", monospace; }
.figure .note { font: 300 24px "Liberation Mono", "Noto Sans CJK SC", sans-serif; }
.figure .colon { font-size: 20px; }
.dialog-foot { display: flex; justify-content: flex-end; gap: 6px; padding-top: 7px; }
.dialog-foot button {
    width: 80px;
    height: 26px;
    justify-content: center;
    border: 1px solid #ccc;
    border-radius: 3px;
    background: #fff;
}
.dialog-foot .ok { background: #2c80e2; border-color: #2c80e2; color: #fff; }

/* red highlight box */
.mark {
    position: absolute;
    right: 189px;
    top: 38px;
    width: 134px;
    height: 52px;
    border: 3px solid #ff2419;
    border-radius: 3px;
}
```
